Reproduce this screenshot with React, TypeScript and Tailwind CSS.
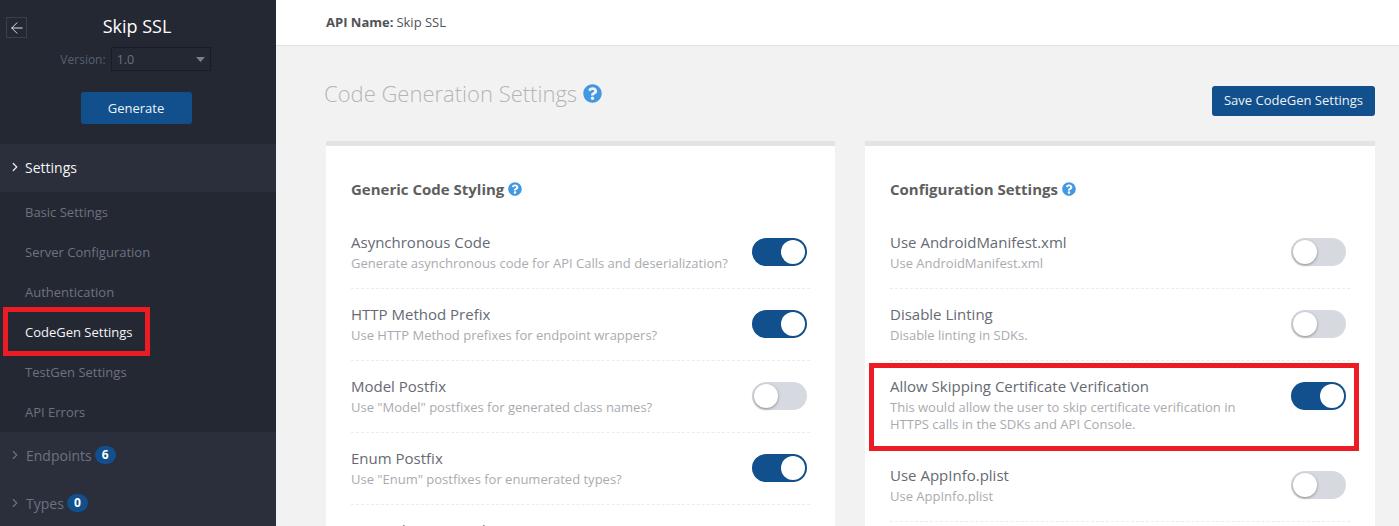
import { ArrowLeft, ChevronRight } from "lucide-react";
import { FaQuestionCircle } from "react-icons/fa";

function Toggle({ on }: { on: boolean }) {
  return on ? (
    <div className="flex h-[28px] w-[55px] shrink-0 items-center justify-end rounded-full bg-[#11508c] pr-[2px]">
      <div className="h-[24px] w-[24px] rounded-full bg-white" />
    </div>
  ) : (
    <div className="flex h-[28px] w-[55px] shrink-0 items-center rounded-full bg-[#d6dae0] pl-[2px]">
      <div className="h-[24px] w-[24px] rounded-full bg-white shadow-[0_1px_3px_rgba(0,0,0,0.35)]" />
    </div>
  );
}

function Row({ title, desc, on, red, h = 72, inset = false }: { title: string; desc: React.ReactNode; on: boolean; red?: boolean; h?: number; inset?: boolean }) {
  return (
    <div className={h === 89 ? "relative h-[89px] pt-[15px]" : "relative h-[72px] pt-[15px]"}>
      <div className={inset ? "flex items-start justify-between pr-[4px]" : "flex items-start justify-between pr-[3px]"}>
        <div>
          <div className="text-[15px] leading-[20px] text-[#666a73]">{title}</div>
          <div className="mt-[3px] text-[13px] leading-[17px] text-[#a9abb0]">{desc}</div>
        </div>
        <div className="mt-[6px]"><Toggle on={on} /></div>
      </div>
      <div className="absolute bottom-0 left-0 right-0 border-b border-dashed border-[#ececee]" />
      {red && <div className="absolute left-[-21px] right-[-9px] top-[2px] bottom-[-1px] border-[5px] border-[#ed1c24]" />}
    </div>
  );
}

function Card({ title, className, children }: { title: string; className: string; children: React.ReactNode }) {
  return (
    <div className={className}>
      <div className="mb-[18px] flex items-center gap-[4px]">
        <span className="text-[15px] font-bold leading-[20px] text-[#5e5e5e]">{title}</span>
        <FaQuestionCircle className="h-[14px] w-[14px] text-[#4299e1]" />
      </div>
      {children}
    </div>
  );
}

function SubItem({ label, active }: { label: string; active?: boolean }) {
  return (
    <div className="relative flex h-[40px] items-center pl-[25px] pt-[2px]">
      {active && <div className="absolute left-[3px] top-[-5px] h-[49px] w-[147px] border-[5px] border-[#ed1c24]" />}
      <span className={active ? "text-[13px] text-[#f4f5f6]" : "text-[13px] text-[#6d7280]"}>{label}</span>
    </div>
  );
}

function NavCount({ label, n }: { label: string; n: number }) {
  return (
    <div className="flex h-[48px] items-center pb-[2px] pl-[8px]">
      <ChevronRight className="h-[14px] w-[14px] text-[#6d7280]" strokeWidth={2} />
      <span className="ml-[4px] text-[14px] text-[#6d7280]">{label}</span>
      <span className="ml-[3px] flex h-[18px] w-[21px] items-center justify-center rounded-full bg-[#11508c] text-[12px] font-bold text-white">{n}</span>
    </div>
  );
}

export default function App() {
  return (
    <div className="flex h-[526px] w-[1399px] overflow-hidden bg-[#f2f2f2] font-['Open_Sans',sans-serif]">
      <aside className="w-[276px] shrink-0 bg-[#242833]">
        <div className="h-[144px]">
          <div className="flex items-center pl-[6px] pt-[17px]">
            <div className="flex h-[21px] w-[21px] items-center justify-center border border-[#3a3f4b]">
              <ArrowLeft className="h-[18px] w-[18px] text-[#e8e9eb]" strokeWidth={1.25} />
            </div>
            <div className="mt-[-3px] flex-1 pr-[29px] text-center text-[18px] leading-[20px] text-white">Skip SSL</div>
          </div>
          <div className="mt-[9px] flex items-center justify-center gap-[5px] pr-[5px]">
            <span className="pt-[2px] text-[12px] text-[#566072]">Version:</span>
            <div className="flex h-[24px] w-[100px] items-center justify-between border border-[#191c23] pl-[5px] pr-[5px]">
              <span className="pt-[2px] text-[12.5px] text-[#6b7280]">1.0</span>
              <svg width="9" height="5" viewBox="0 0 9 5"><path d="M0 0h9L4.5 5z" fill="#7a808c" /></svg>
            </div>
          </div>
          <div className="mt-[21px] flex justify-center pr-[4px]">
            <div className="flex h-[32px] w-[111px] items-center justify-center rounded-[3px] bg-[#11508c] pt-[1px] text-[13px] font-medium text-[#eef2f6]">Generate</div>
          </div>
        </div>
        <div className="flex h-[48px] items-center bg-[#2a2f3b] pb-[2px] pl-[8px]">
          <ChevronRight className="h-[14px] w-[14px] text-[#e8e9eb]" strokeWidth={2.2} />
          <span className="ml-[3px] text-[14px] text-[#f4f5f6]">Settings</span>
        </div>
        <SubItem label="Basic Settings" />
        <SubItem label="Server Configuration" />
        <SubItem label="Authentication" />
        <SubItem label="CodeGen Settings" active />
        <SubItem label="TestGen Settings" />
        <SubItem label="API Errors" />
        <div className="bg-[#2a2f3b] pb-[20px]">
          <NavCount label="Endpoints" n={6} />
          <NavCount label="Types" n={0} />
        </div>
      </aside>
      <main className="min-w-0 flex-1">
        <header className="flex h-[46px] items-center border-b border-[#dfe0e2] bg-white pl-[50px] text-[13px] text-[#4f5358]">
          <span className="font-bold">API Name:</span>
          <span className="ml-[3px]">Skip SSL</span>
        </header>
        <div className="pl-[50px] pr-[24px]">
          <div className="flex h-[95px] items-start justify-between">
            <div className="ml-[-2px] mt-[31px] flex items-center gap-[6px]">
              <span className="text-[22px] font-light leading-[32px] text-[#b4b5b7]">Code Generation Settings</span>
              <FaQuestionCircle className="h-[19px] w-[19px] text-[#4299e1]" />
            </div>
            <div className="mt-[40px] flex h-[30px] w-[163px] items-center justify-center rounded-[3px] bg-[#11508c] text-[13px] font-normal text-[#eef2f6]">Save CodeGen Settings</div>
          </div>
          <div className="flex gap-[30px]">
            <Card title="Generic Code Styling" className="h-[400px] w-[509px] shrink-0 border-t-[5px] border-[#e2e3e5] bg-white px-[25px] pt-[33px]">
              <Row title="Asynchronous Code" desc="Generate asynchronous code for API Calls and deserialization?" on />
              <Row title="HTTP Method Prefix" desc="Use HTTP Method prefixes for endpoint wrappers?" on />
              <Row title="Model Postfix" desc={'Use "Model" postfixes for generated class names?'} on={false} />
              <Row title="Enum Postfix" desc={'Use "Enum" postfixes for enumerated types?'} on />
              <Row title="Append JSON Header" desc="" on={false} />
            </Card>
            <Card title="Configuration Settings" className="h-[400px] flex-1 border-t-[5px] border-[#e2e3e5] bg-white px-[25px] pt-[33px]">
              <Row inset title="Use AndroidManifest.xml" desc="Use AndroidManifest.xml" on={false} />
              <Row inset title="Disable Linting" desc="Disable linting in SDKs." on={false} />
              <Row inset h={89} red title="Allow Skipping Certificate Verification" desc={<>This would allow the user to skip certificate verification in<br />HTTPS calls in the SDKs and API Console.</>} on />
              <Row inset title="Use AppInfo.plist" desc="Use AppInfo.plist" on={false} />
            </Card>
          </div>
        </div>
      </main>
    </div>
  );
}
